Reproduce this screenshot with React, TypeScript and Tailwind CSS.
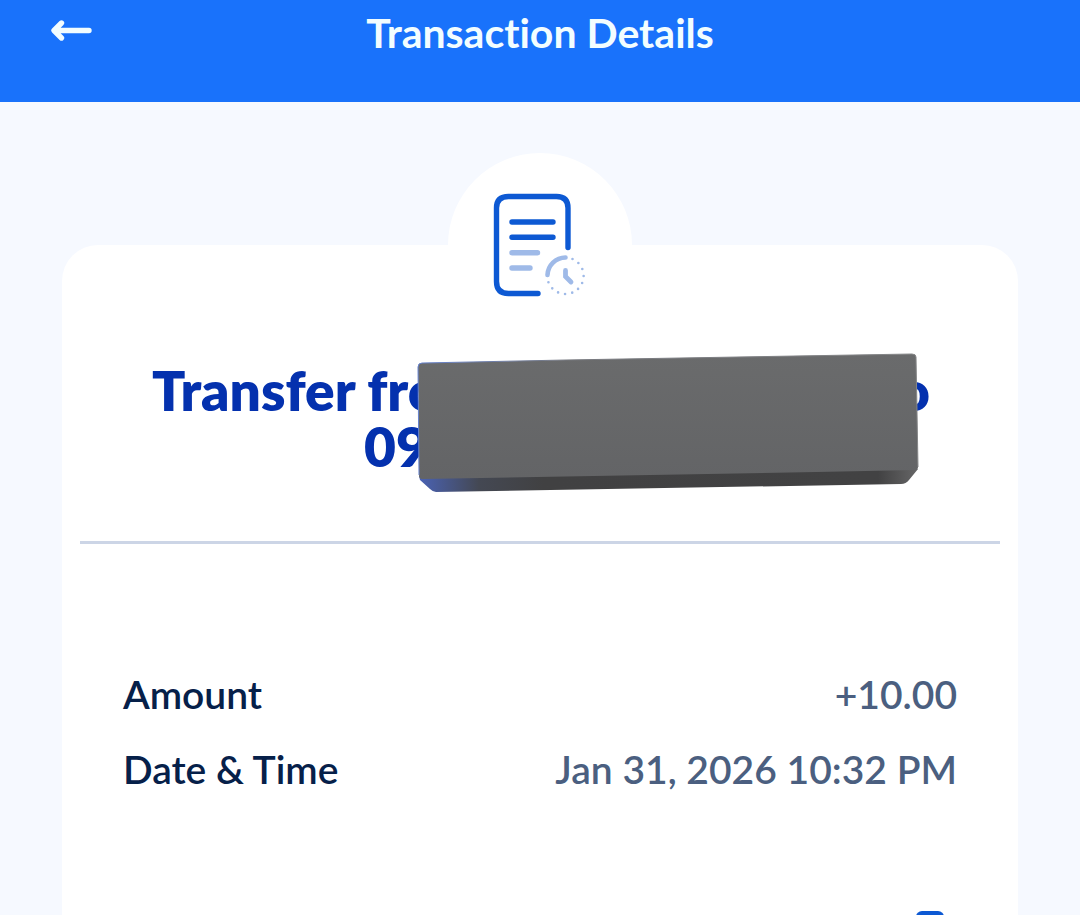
import React from "react";

function BackArrow() {
  return (
    <svg width="44" height="24" viewBox="0 0 44 24" fill="none" stroke="#f2fdff" strokeWidth="5.400" strokeLinecap="round" strokeLinejoin="round" aria-hidden="true">
      <path d="M39 11.500H5M11.500 4L4 11.500L11.500 19" />
    </svg>
  );
}

function ReceiptIcon() {
  return (
    <svg width="96" height="106" viewBox="0 0 96 106" fill="none" strokeLinecap="round" aria-hidden="true">
      <g stroke="#0d59d3" strokeWidth="5.400">
        <path d="M76 55.500V16Q76 4.500 64.500 4.500H16.500Q4.500 4.500 4.500 16V89.500Q4.500 101.500 16.500 101.500H46" />
        <path d="M20 30H61M20 45.300H61" />
      </g>
      <g stroke="#9fbae8" strokeWidth="5.400">
        <path d="M20 60.700H45.500M20 76H38" />
        <path d="M55.500 83A18.200 18.200 0 0 1 73.500 65.500" strokeWidth="4.600" />
        <path d="M73.500 78.500V84.500L79 90" strokeWidth="4.800" />
      </g>
      <path d="M80.500 67A18.200 18.200 0 1 1 56 89" stroke="#9fbae8" strokeWidth="2.600" strokeDasharray="0 7.150" />
    </svg>
  );
}

function GreyBlock() {
  return (
    <svg className="absolute left-[354px] top-[-10px]" width="504" height="144" viewBox="0 0 504 144" aria-hidden="true">
      <defs>
        <linearGradient id="face" x1="0" y1="0" x2="0" y2="1">
          <stop offset="0" stopColor="#6a6b6c" />
          <stop offset="1" stopColor="#636466" />
        </linearGradient>
        <linearGradient id="edge" x1="0" y1="0" x2="1" y2="0">
          <stop offset="0" stopColor="#4a62b4" />
          <stop offset="0.120" stopColor="#444853" />
          <stop offset="0.250" stopColor="#414142" />
          <stop offset="0.920" stopColor="#424243" />
          <stop offset="1" stopColor="#666667" />
        </linearGradient>
        <linearGradient id="rim" x1="0" y1="0" x2="1" y2="0">
          <stop offset="0" stopColor="#6582cf" />
          <stop offset="0.300" stopColor="#77797f" />
          <stop offset="1" stopColor="#858687" />
        </linearGradient>
      </defs>
      <path d="M3 124L502 117L493 128Q490 132 485 132L20 140Q17 140 14 137L4 128Z" fill="url(#edge)" />
      <path d="M2 15Q2 11 6 11L150 8L496 2Q500 2 500 5L502 115Q502 118 499 118L400 120L6 127Q3 127 3 123Z" fill="url(#face)" />
      <path d="M3 123L2 15Q2 11 6 11L150 8L496 2Q500 2 500 5L502 115" fill="none" stroke="url(#rim)" />
    </svg>
  );
}

export default function App() {
  return (
    <div className="flex h-screen flex-col overflow-hidden bg-[#f6f9ff] font-['Lato',sans-serif] [font-variant-ligatures:none]">
      <header className="grid h-[102px] shrink-0 grid-cols-[1fr_auto_1fr] items-start bg-[#1972fb] px-[50px] pt-2">
        <button type="button" aria-label="Back" className="mt-[11px] w-11">
          <BackArrow />
        </button>
        <h1 className="text-[41px] leading-[50px] font-bold text-[#f2fdff]">Transaction Details</h1>
      </header>
      <main className="flex grow flex-col px-[62px] pt-[143px]">
        <section className="relative flex grow flex-col rounded-t-[36px] bg-white">
          <div className="absolute top-[-92px] left-1/2 flex size-[184px] -translate-x-1/2 items-center justify-center rounded-full bg-white">
            <ReceiptIcon />
          </div>
          <div className="mx-[18px] border-b-3 border-[#ccd5e6] pt-[117px] pb-[67px]">
            <h2 className="relative -mx-[18px] pr-[88px] pl-[90px] text-[55px] leading-[56px] font-extrabold text-[#0431ae]">
              <span className="flex justify-between">
                <span>Transfer from</span>
                <span>to</span>
              </span>
              <span className="block pl-[212px]">09</span>
              <GreyBlock />
            </h2>
          </div>
          <dl className="flex flex-col gap-[25px] px-[61px] pt-[125px] text-[39px] leading-[50px] font-semibold">
            <div className="flex justify-between">
              <dt className="text-[#062049]">Amount</dt>
              <dd className="text-[#4b5f80]">+10.00</dd>
            </div>
            <div className="flex justify-between">
              <dt className="text-[#062049]">Date &amp; Time</dt>
              <dd className="text-[#4b5f80]">Jan 31, 2026 10:32 PM</dd>
            </div>
          </dl>
          <div className="mt-[117px] flex h-10 shrink-0 justify-end px-[74px]">
            <span className="h-10 w-7 rounded-md bg-[#0d59d3]" />
          </div>
        </section>
      </main>
    </div>
  );
}
